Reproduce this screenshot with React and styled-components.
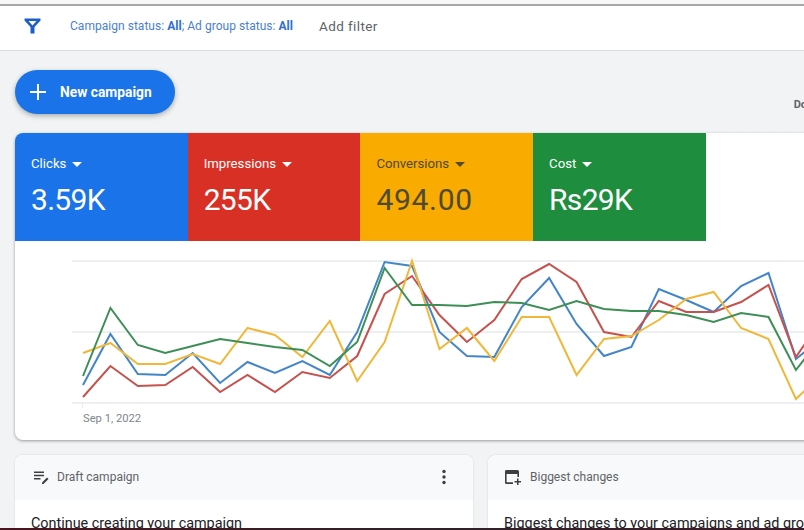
import React from 'react';
import styled, { createGlobalStyle } from 'styled-components';

const GlobalStyle = createGlobalStyle`
  html, body {
    margin: 0;
    padding: 0;
    background: #f1f3f4;
  }
  * {
    box-sizing: border-box;
  }
`;

const Page = styled.div`
  position: relative;
  width: 804px;
  height: 530px;
  overflow: hidden;
  background: #f1f3f4;
  font-family: Roboto, "Liberation Sans", sans-serif;
  color: #3c4043;
`;

const TopStrip = styled.div`
  height: 6px;
  background: #f7f7f7;
  border-bottom: 2px solid #a8a8a8;
`;

const FilterBar = styled.div`
  display: flex;
  align-items: center;
  height: 45px;
  padding: 0 0 4px 23px;
  background: #fff;
  border-bottom: 1px solid #dadce0;
`;

const FilterSummary = styled.div`
  margin-left: 28px;
  font-size: 12px;
  letter-spacing: 0.03px;
  color: #4a7fd0;
  white-space: nowrap;

  b {
    font-weight: 700;
    color: #2f6fd0;
  }
`;

const AddFilter = styled.div`
  margin-left: 26px;
  font-size: 13.5px;
  letter-spacing: 0.4px;
  color: #5f6368;
`;

const ActionRow = styled.div`
  display: flex;
  align-items: center;
  height: 82px;
  padding-left: 15px;
`;

const NewButton = styled.div`
  display: flex;
  align-items: center;
  gap: 13px;
  width: 160px;
  height: 44px;
  padding-left: 14px;
  border-radius: 22px;
  background: #1a73e8;
  box-shadow: 0 2px 5px rgba(60, 64, 67, 0.4);
  color: #fff;
  font-size: 13.8px;
  font-weight: 700;
`;

const ClippedLabel = styled.div`
  margin: 24px -3px 0 auto;
  font-size: 11px;
  font-weight: 700;
  color: #5f6368;
`;

const ChartCard = styled.section`
  width: 810px;
  margin-left: 15px;
  height: 307px;
  background: #fff;
  border-radius: 8px;
  overflow: hidden;
  box-shadow: 0 1px 3px rgba(60, 64, 67, 0.5);
`;

const Scorecards = styled.div`
  display: flex;
`;

const Scorecard = styled.div`
  width: 172.7px;
  height: 108px;
  padding: 23px 16px 0;
  background: ${props => props.color};
  color: ${props => props.dark ? '#4d4a35' : '#fff'};
`;

const MetricName = styled.div`
  display: flex;
  align-items: center;
  gap: 6px;
  font-size: 13.2px;
  line-height: 16px;
`;

const Caret = styled.span`
  width: 0;
  height: 0;
  border-left: 5px solid transparent;
  border-right: 5px solid transparent;
  border-top: 5px solid currentColor;
`;

const MetricValue = styled.div`
  margin-top: 11px;
  font-size: 30px;
  line-height: 34px;
  letter-spacing: ${props => props.wide ? '0.7px' : '-0.7px'};
`;

const ChartSvg = styled.svg`
  display: block;
  width: 810px;
  height: 171px;
`;

const AxisLabel = styled.div`
  margin-left: 68px;
  font-size: 11.2px;
  line-height: 14px;
  color: #80868b;
`;

const BottomCards = styled.div`
  display: grid;
  grid-template-columns: 458px 458px;
  gap: 15px;
  margin: 15px 0 0 15px;
`;

const InfoCard = styled.section`
  background: #fff;
  border-radius: 8px 8px 0 0;
  box-shadow: 0 0 2px rgba(60, 64, 67, 0.2);
`;

const InfoHeader = styled.div`
  display: flex;
  align-items: center;
  height: 45px;
  padding: 0 27px 2px 16px;
  background: #f8f9fa;
  border-radius: 8px 8px 0 0;
  font-size: 12px;
  color: #5f6368;
`;

const InfoTitle = styled.span`
  margin-left: 8px;
`;

const MoreDots = styled.svg`
  margin-left: auto;
`;

const InfoBody = styled.div`
  padding: 15px 16px 0;
  font-size: 14.4px;
  line-height: 18px;
  color: #202124;
  white-space: nowrap;
`;

const ScreenEdge = styled.div`
  position: absolute;
  left: 0;
  right: 0;
  bottom: 0;
  height: 2px;
  background: linear-gradient(90deg, #4a1420, #2e2228 50%, #3a1c28);
`;

const metrics = [
  { name: 'Clicks', value: '3.59K', color: '#1a73e8' },
  { name: 'Impressions', value: '255K', color: '#d93025' },
  { name: 'Conversions', value: '494.00', color: '#f9ab00', dark: true, wide: true },
  { name: 'Cost', value: 'Rs29K', color: '#1e8e3e' },
];

// traced from the reference, one y per day (page pixels)
const series = [
  { color: '#4285c8', y: [385, 334, 374, 375, 353, 383, 362, 373, 361, 375, 332, 262, 266, 332, 356, 357, 307, 278, 324, 356, 347, 289, 300, 312, 286, 273, 359, 337] },
  { color: '#c5524d', y: [397, 366, 386, 385, 367, 392, 375, 392, 372, 378, 356, 294, 276, 315, 342, 320, 279, 264, 282, 332, 337, 301, 312, 312, 302, 285, 357, 317] },
  { color: '#f0b83a', y: [353, 343, 364, 364, 354, 364, 328, 335, 357, 321, 381, 342, 261, 349, 328, 361, 317, 317, 375, 339, 336, 320, 299, 292, 328, 339, 399, 373] },
  { color: '#3d8f56', y: [376, 308, 345, 353, 346, 339, 343, 347, 350, 366, 342, 268, 305, 305, 306, 302, 303, 310, 301, 309, 311, 311, 315, 322, 313, 317, 370, 335] },
];

const toPoints = ys => ys.map((y, i) => `${83 + i * 27.42},${y}`).join(' ');

const FilterIcon = () => (
  <svg width="19" height="18" viewBox="0 0 19 18">
    <path d="M1.5 1.5h16v2L11.500 10v6.500h-4V10L1.500 3.500z M5.500 4L9.500 8.500L13.500 4z" fill="#1a5fc8" fillRule="evenodd" />
  </svg>
);

const PlusIcon = () => (
  <svg width="18" height="18" viewBox="0 0 18 18">
    <path d="M8 1h2v7h7v2h-7v7H8v-7H1V8h7z" fill="#fff" />
  </svg>
);

const DraftIcon = () => (
  <svg width="18" height="16" viewBox="-2 0 18 16">
    <path d="M1 2.5h10V4H1zM1 5.8h10v1.500H1zM1 9.100h6.500v1.500H1z" fill="#3c4043" />
    <path d="M9 13.500l5-5 1.500 1.500-5 5H9z" fill="#3c4043" />
  </svg>
);

const ChangesIcon = () => (
  <svg width="18" height="16" viewBox="0 0 18 16">
    <path d="M2 1h11.500a1.500 1.500 0 0 1 1.500 1.500V8h-1.600V5H2.600v8.200H9V15H2.500A1.500 1.500 0 0 1 1 13.500v-11A1.500 1.500 0 0 1 2 1z" fill="#3c4043" />
    <path d="M13 9.500h1.500V12H17v1.500h-2.500V16H13v-2.500h-2.500V12H13z" fill="#3c4043" />
  </svg>
);

const App = () => {
  return (
    <Page>
      <GlobalStyle />
      <TopStrip />
      <FilterBar>
        <FilterIcon />
        <FilterSummary>
          Campaign status: <b>All</b>; Ad group status: <b>All</b>
        </FilterSummary>
        <AddFilter>Add filter</AddFilter>
      </FilterBar>
      <ActionRow>
        <NewButton>
          <PlusIcon />
          New campaign
        </NewButton>
        <ClippedLabel>Do</ClippedLabel>
      </ActionRow>
      <ChartCard>
        <Scorecards>
          {metrics.map(metric => (
            <Scorecard key={metric.name} color={metric.color} dark={metric.dark}>
              <MetricName>
                {metric.name}
                <Caret />
              </MetricName>
              <MetricValue wide={metric.wide}>{metric.value}</MetricValue>
            </Scorecard>
          ))}
        </Scorecards>
        <ChartSvg viewBox="15 241 810 171">
          {[261, 332, 403].map(y => (
            <line key={y} x1="72" x2="825" y1={y} y2={y} stroke="#e8eaed" strokeWidth="1.4" />
          ))}
          <line x1="82.5" x2="82.5" y1="403" y2="408" stroke="#e8eaed" />
          {series.map(line => (
            <polyline
              key={line.color}
              points={toPoints(line.y)}
              fill="none"
              stroke={line.color}
              strokeWidth="2"
              strokeLinejoin="miter"
            />
          ))}
        </ChartSvg>
        <AxisLabel>Sep 1, 2022</AxisLabel>
      </ChartCard>
      <BottomCards>
        <InfoCard>
          <InfoHeader>
            <DraftIcon />
            <InfoTitle>Draft campaign</InfoTitle>
            <MoreDots width="4" height="16" viewBox="0 0 4 16">
              <circle cx="2" cy="2.5" r="1.7" fill="#3c4043" />
              <circle cx="2" cy="8" r="1.7" fill="#3c4043" />
              <circle cx="2" cy="13.5" r="1.7" fill="#3c4043" />
            </MoreDots>
          </InfoHeader>
          <InfoBody>Continue creating your campaign</InfoBody>
        </InfoCard>
        <InfoCard>
          <InfoHeader>
            <ChangesIcon />
            <InfoTitle>Biggest changes</InfoTitle>
          </InfoHeader>
          <InfoBody>Biggest changes to your campaigns and ad groups</InfoBody>
        </InfoCard>
      </BottomCards>
      <ScreenEdge />
    </Page>
  );
};

export default App;
